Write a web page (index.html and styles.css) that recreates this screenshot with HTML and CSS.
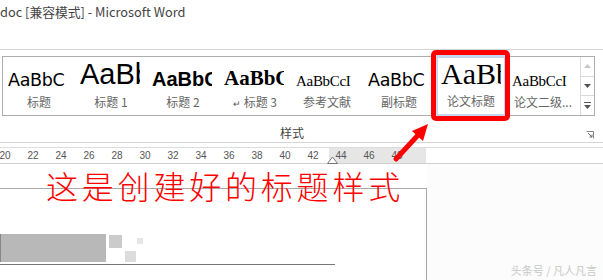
FILE: index.html
```html
<!DOCTYPE html>
<html lang="zh-CN">
<head>
    <meta charset="UTF-8">
    <title>Microsoft Word</title>
    <link rel="stylesheet" href="styles.css">
</head>
<body>
    <div class="titlebar">doc [兼容模式] - Microsoft Word</div>

    <div class="ribbon">
        <div class="gallery">
            <div class="item">
                <div class="sample s-title">AaBbC</div>
                <div class="label">标题</div>
            </div>
            <div class="item">
                <div class="sample s-h1">AaBbC</div>
                <div class="label">标题 1</div>
            </div>
            <div class="item">
                <div class="sample s-h2">AaBbC</div>
                <div class="label">标题 2</div>
            </div>
            <div class="item">
                <div class="sample s-h3">AaBbC</div>
                <div class="label"><span class="mark">↵</span> 标题 3</div>
            </div>
            <div class="item">
                <div class="sample s-small">AaBbCcI</div>
                <div class="label">参考文献</div>
            </div>
            <div class="item">
                <div class="sample s-sub">AaBbC</div>
                <div class="label">副标题</div>
            </div>
            <div class="item selected">
                <div class="sample s-thesis">AaBbC</div>
                <div class="label">论文标题</div>
            </div>
            <div class="item">
                <div class="sample s-small">AaBbCcI</div>
                <div class="label">论文二级...</div>
            </div>
            <div class="scroller">
                <div class="btn up">
                    <svg width="7" height="4" viewBox="0 0 7 4"><path d="M0 4 L3.5 0 L7 4 Z" fill="#c8c8c8"/></svg>
                </div>
                <div class="btn">
                    <svg width="7" height="4" viewBox="0 0 7 4"><path d="M0 0 L3.5 4 L7 0 Z" fill="#555"/></svg>
                </div>
                <div class="btn">
                    <svg width="7" height="7" viewBox="0 0 7 7"><rect x="0" y="0" width="7" height="1" fill="#555"/><path d="M0 3 L3.5 7 L7 3 Z" fill="#555"/></svg>
                </div>
            </div>
        </div>
        <div class="group-label">
            <span>样式</span>
            <svg class="launcher" width="8" height="8" viewBox="0 0 8 8"><path d="M0.5 0.5 H7.5 V7.5" fill="none" stroke="#888"/><path d="M2 2 L6 6 M6 3.5 V6 H3.5" fill="none" stroke="#666"/></svg>
        </div>
    </div>

    <div class="ruler">
        <div class="ticks">
            <span>20</span><span>22</span><span>24</span><span>26</span><span>28</span>
            <span>30</span><span>32</span><span>34</span><span>36</span><span>38</span>
            <span>40</span><span>42</span><span class="off">44</span><span class="off">46</span><span class="off">48</span>
        </div>
        <svg class="indent" width="11" height="8" viewBox="0 0 11 8"><path d="M0.5 7.5 L5.5 1 L10.5 7.5 Z" fill="#fff" stroke="#777"/></svg>
    </div>

    <div class="doc">
        <div class="page">
            <div class="blocks">
                <div class="bar"></div>
                <div class="sq sq1"></div>
                <div class="sq sq2"></div>
                <div class="sq sq3"></div>
            </div>
            <div class="underline"></div>
        </div>
    </div>

    <div class="highlight"></div>
    <svg class="arrow" width="46" height="46" viewBox="0 0 46 46">
        <path d="M6 40 L30 14" stroke="#f00" stroke-width="5" stroke-linecap="round"/>
        <path d="M38 5 L22 12 L33 22 Z" fill="#f00"/>
    </svg>
    <div class="callout">这是创建好的标题样式</div>
    <div class="watermark">头条号 / 凡人凡言</div>
</body>
</html>
```

FILE: styles.css
```css
body {
    margin: 0;
    width: 603px;
    height: 280px;
    overflow: hidden;
    position: relative;
    background: #fff;
    font-family: "Noto Sans CJK SC", "Liberation Sans", sans-serif;
}

.titlebar {
    height: 49px;
    padding-top: 3px;
    box-sizing: border-box;
    font-size: 12.8px;
    line-height: 18px;
    color: #444;
    white-space: nowrap;
}

.ribbon {
    border-top: 1px solid #d6d6d6;
    padding-top: 6px;
    border-bottom: 1px solid #d6d6d6;
}

.gallery {
    display: flex;
    margin-left: 2px;
    width: 591px;
    height: 58px;
    border: 1px solid #adadad;
    background: #fff;
}

.item {
    width: 72px;
    flex: none;
    box-sizing: border-box;
    padding-top: 1px;
}

.sample {
    width: 60px;
    height: 31px;
    margin-left: 5px;
    display: flex;
    align-items: flex-end;
    overflow: hidden;
    white-space: nowrap;
    line-height: 1;
    color: #000;
}

.s-title {
    font-family: "DejaVu Sans", sans-serif;
    font-size: 17.5px;
    letter-spacing: -0.3px;
}

.s-h1 {
    font-family: "Liberation Sans", sans-serif;
    font-size: 29px;
}

.s-h2 {
    font-family: "Liberation Sans", sans-serif;
    font-weight: bold;
    font-size: 20px;
}

.s-h3 {
    font-family: "Liberation Serif", serif;
    font-weight: bold;
    font-size: 21px;
}

.s-small {
    font-family: "Liberation Serif", serif;
    font-size: 15px;
    letter-spacing: -0.3px;
}

.s-sub {
    font-family: "DejaVu Sans", sans-serif;
    font-size: 17.5px;
    letter-spacing: -0.3px;
}

.s-thesis {
    font-family: "Liberation Serif", serif;
    font-size: 30px;
}

.label {
    margin-top: 5px;
    text-align: center;
    font-size: 12px;
    line-height: 16px;
    color: #666;
    white-space: nowrap;
}

.mark {
    font-size: 9px;
    color: #555;
}

.selected {
    border: 3px solid #c5d8f0;
    padding-top: 0;
    margin-top: -2px;
    height: 62px;
}

.selected .sample {
    margin-left: 3px;
}

.selected .label {
    margin-top: 4px;
}

.scroller {
    margin-left: 1px;
    width: 14px;
    display: flex;
    flex-direction: column;
}

.btn {
    flex: 1;
    border-left: 1px solid #d9d9d9;
    border-bottom: 1px solid #d9d9d9;
    display: flex;
    align-items: center;
    justify-content: center;
}

.btn:last-child {
    border-bottom: none;
}

.group-label {
    height: 26px;
    box-sizing: border-box;
    position: relative;
    font-size: 12px;
    line-height: 20px;
    padding-top: 7px;
    color: #444;
    padding-left: 280px;
}

.launcher {
    position: absolute;
    right: 9px;
    top: 15px;
}

.ruler {
    margin-top: 4px;
    height: 15px;
    border-top: 1px solid #dcdcdc;
    border-bottom: 1px solid #d0d0d0;
    background: linear-gradient(to right, #fff 329px, #e6e6e6 329px, #e6e6e6 426px, #fff 426px);
    position: relative;
}

.ticks {
    display: flex;
    margin-left: -9px;
    font-family: "Liberation Sans", sans-serif;
    font-size: 10px;
    line-height: 15px;
    color: #555;
}

.ticks span {
    width: 28px;
    text-align: center;
}

.indent {
    position: absolute;
    left: 327px;
    top: 8px;
}

.doc {
    height: 117px;
    padding-top: 24px;
    box-sizing: border-box;
    background: linear-gradient(to right, #fff 427px, #fcfcfc 427px);
}

.page {
    width: 426px;
    height: 100%;
    border-top: 1px solid #a8a8a8;
    border-right: 1px solid #a8a8a8;
    background: #fff;
}

.blocks {
    display: flex;
    align-items: flex-start;
    margin-top: 45px;
    height: 28px;
}

.bar {
    width: 106px;
    height: 28px;
    background: #b8b8b8;
    box-shadow: inset 1px 0 0 #888;
}

.sq {
    flex: none;
}

.sq1 {
    width: 13px;
    height: 13px;
    margin: 1px 0 0 3px;
    background: #cbcbcb;
}

.sq2 {
    width: 11px;
    height: 11px;
    margin: 17px 0 0 3px;
    background: #dcdcdc;
}

.sq3 {
    width: 6px;
    height: 6px;
    margin: 4px 0 0 1px;
    background: #e6e6e6;
}

.underline {
    margin-top: 2px;
    width: 335px;
    height: 1px;
    background: #777;
}

.highlight {
    position: absolute;
    left: 431px;
    top: 50px;
    width: 69px;
    height: 61px;
    border: 5px solid #f00;
    border-radius: 5px;
}

.arrow {
    position: absolute;
    left: 390px;
    top: 119px;
}

.callout {
    position: absolute;
    left: 46px;
    top: 165px;
    font-size: 32px;
    font-weight: 300;
    letter-spacing: 3.8px;
    line-height: 40px;
    color: #f00;
    white-space: nowrap;
}

.watermark {
    position: absolute;
    right: 6px;
    bottom: 2px;
    font-size: 11px;
    color: #c8c8c8;
}
```
